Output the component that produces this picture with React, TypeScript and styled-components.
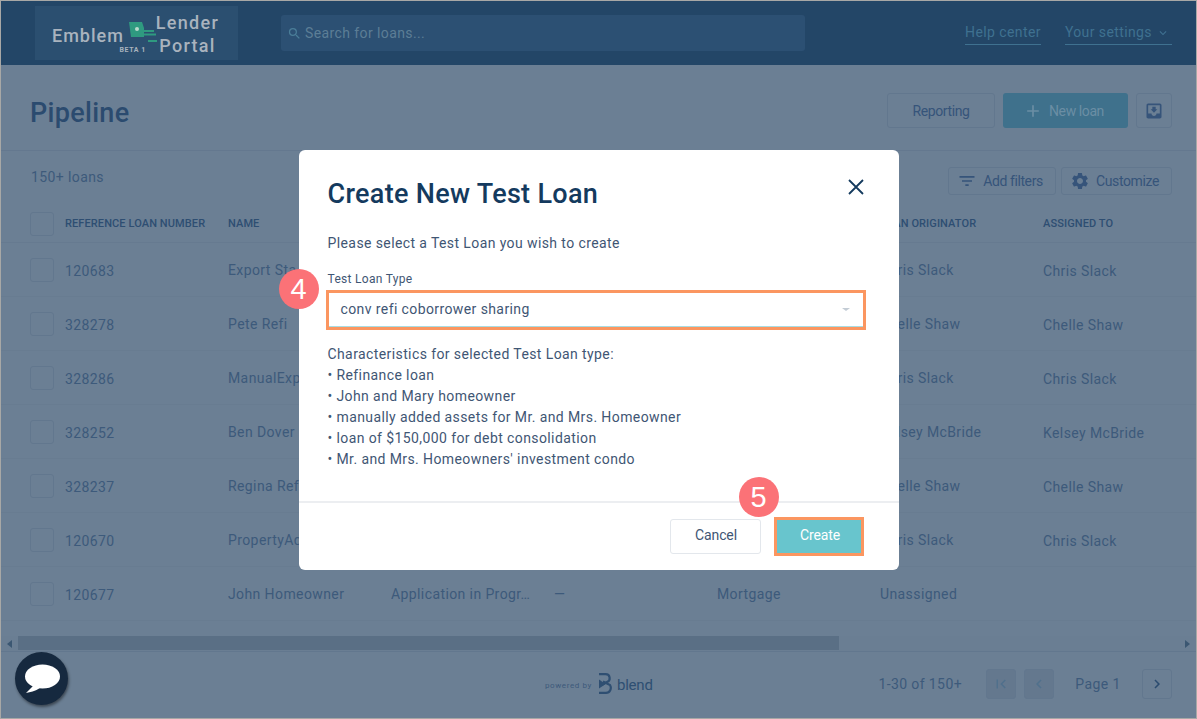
import React from 'react'
import styled, { createGlobalStyle } from 'styled-components'
import {
  MdAdd,
  MdChevronLeft,
  MdChevronRight,
  MdExpandMore,
  MdFilterList,
  MdFirstPage,
  MdMoveToInbox,
  MdSearch,
  MdSettings,
} from 'react-icons/md'

const GlobalStyle = createGlobalStyle`
  * {
    box-sizing: border-box;
  }
  body {
    margin: 0;
    font-family: Roboto, "Liberation Sans", sans-serif;
    background: #6b7f94;
  }
`

const Page = styled.div`
  position: relative;
  width: 1197px;
  height: 719px;
  overflow: hidden;
  display: flex;
  flex-direction: column;
  background: #6b7f94;
  border: 1px solid #a8a8a6;
  color: #3d5a7b;
  font-size: 14px;
  letter-spacing: 0.4px;
`

const TopBar = styled.header`
  height: 64px;
  flex: none;
  display: flex;
  align-items: center;
  padding: 0 24px 0 34px;
  background: #234667;
`

const LogoBox = styled.div`
  width: 203px;
  height: 54px;
  flex: none;
  display: flex;
  padding: 11px 0 0 17px;
  background: #2b4f70;
  color: #a9b3be;
`

const BrandLeft = styled.div`
  width: 94px;
  display: flex;
  flex-direction: column;
  flex: none;
`

const BrandName = styled.div`
  padding-top: 1px;
  font-size: 18px;
  line-height: 36px;
  font-weight: 500;
  letter-spacing: 1px;
`

const BrandBeta = styled.div`
  margin-top: -8px;
  text-align: right;
  font-size: 7px;
  line-height: 9px;
  font-weight: 700;
  letter-spacing: 0.6px;
`

const BrandFlag = styled.svg`
  width: 28px;
  height: 22px;
  flex: none;
  margin: 5px 0 0 -17px;
`

const BrandRight = styled.div`
  margin-left: -2px;
  margin-top: -6px;
  width: 65px;
  display: flex;
  flex-direction: column;
  align-items: center;
  font-size: 18px;
  line-height: 23px;
  font-weight: 500;
  letter-spacing: 1.3px;
`

const SearchBox = styled.div`
  width: 524px;
  height: 36px;
  margin-left: 43px;
  display: flex;
  align-items: center;
  gap: 3px;
  padding-left: 6px;
  border-radius: 3px;
  background: #2c5073;
  color: #5c7e96;
  font-size: 14px;
`

const SearchIcon = styled(MdSearch)`
  color: #4a7d98;
  font-size: 15px;
`

const TopLinks = styled.nav`
  margin-left: auto;
  padding-top: 2px;
  display: flex;
  gap: 24px;
  color: #3f7190;
`

const TopLink = styled.a<{ $menu?: boolean }>`
  display: flex;
  align-items: center;
  gap: 4px;
  padding: 0 ${p => (p.$menu ? 2 : 0)}px 2px 0;
  line-height: 19px;
  border-bottom: 1px solid #3f7190;
`

const TitleRow = styled.div`
  height: 86px;
  flex: none;
  display: flex;
  align-items: center;
  padding: 6px 24px 0 29px;
  border-bottom: 1px solid #64788f;
`

const PageTitle = styled.h1`
  margin: 5px auto 0 0;
  font-size: 27px;
  font-weight: 500;
  letter-spacing: 0.3px;
  color: #2b4b6f;
`

const OutlineButton = styled.button<{ $w: number; $h: number }>`
  width: ${p => p.$w}px;
  height: ${p => p.$h}px;
  display: flex;
  align-items: center;
  justify-content: center;
  gap: 5px;
  margin-left: 8px;
  padding: 0;
  border: 1px solid #62778e;
  border-radius: 3px;
  background: transparent;
  color: #36547a;
  font: inherit;
  letter-spacing: -0.4px;
`

const NewLoanButton = styled(OutlineButton)`
  padding-right: 4px;
  border: 0;
  background: #3f718c;
  color: #6b8ea4;
  gap: 6px;
`

const ButtonIcon = styled.span<{ $size: number }>`
  display: flex;
  font-size: ${p => p.$size}px;
`

const ToolRow = styled.div`
  height: 54px;
  flex: none;
  display: flex;
  align-items: center;
  padding: 6px 24px 0 30px;
`

const LoanCount = styled.span`
  margin: 0 auto 8px 0;
`

const ToolButton = styled(OutlineButton)`
  margin-left: 5px;
  padding-right: 4px;
  gap: 6px;
  &:first-of-type {
    margin-left: 0;
  }
`

const Table = styled.div`
  flex: 1;
  display: flex;
  flex-direction: column;
`

const Row = styled.div<{ $head?: boolean }>`
  height: ${p => (p.$head ? 38 : 54)}px;
  flex: none;
  display: grid;
  grid-template-columns: 64px repeat(7, 163px);
  align-items: center;
  border-bottom: 1px solid ${p => (p.$head ? '#667a90' : '#687c91')};
`

const CheckCell = styled.div`
  padding-left: 29px;
  display: flex;
`

const CheckBox = styled.span`
  width: 24px;
  height: 24px;
  border: 1px solid #62778e;
  border-radius: 3px;
`

const HeadCell = styled.div`
  font-size: 11px;
  font-weight: 500;
  letter-spacing: 0.1px;
  white-space: nowrap;
  color: #2e4e72;
`

const Cell = styled.div<{ $low?: boolean }>`
  padding-top: ${p => (p.$low ? 2 : 0)}px;
  padding-right: 12px;
  white-space: nowrap;
  overflow: hidden;
  text-overflow: ellipsis;
`

const ScrollTrack = styled.div`
  height: 16px;
  flex: none;
  display: flex;
  align-items: center;
  justify-content: space-between;
  padding: 0 6px;
  margin-top: 15px;
  border-bottom: 1px solid #62778e;
  background: #6a7e93;
`

const ScrollThumb = styled.div`
  width: 821px;
  height: 14px;
  margin: 0 auto 1px 6px;
  background: #5a6f85;
`

const ScrollArrow = styled.span<{ $right?: boolean }>`
  width: 0;
  height: 0;
  border-style: solid;
  border-width: 4px 0 4px 5px;
  border-color: transparent transparent transparent #3b5772;
  transform: ${p => (p.$right ? 'none' : 'scaleX(-1)')};
`

const Footer = styled.footer`
  height: 66px;
  flex: none;
  display: flex;
  align-items: center;
  padding: 0 24px 3px 544px;
`

const PoweredBy = styled.div`
  display: flex;
  align-items: center;
  gap: 6px;
  padding-top: 3px;
  font-size: 8px;
  letter-spacing: 0.6px;
`

const BlendWord = styled.span`
  margin-left: -1px;
  font-size: 15px;
  font-weight: 400;
  letter-spacing: -0.2px;
  color: #2f4f72;
`

const BlendMark = styled.svg`
  width: 14px;
  height: 21px;
  margin-top: -3px;
`

const PageCount = styled.span`
  margin-left: auto;
  margin-right: 24px;
`

const PageButton = styled.span<{ $off?: boolean }>`
  width: 30px;
  height: 30px;
  margin-right: 8px;
  display: flex;
  align-items: center;
  justify-content: center;
  font-size: 18px;
  border: 1px solid #62778e;
  border-radius: 3px;
  background: ${p => (p.$off ? '#64788e' : 'transparent')};
  color: ${p => (p.$off ? '#50708c' : '#2b4b6f')};
  &:last-child {
    margin-right: 0;
  }
`

const PageLabel = styled.span`
  width: 88px;
  text-align: center;
  margin-left: -8px;
`

const ChatBubble = styled.div`
  position: absolute;
  left: 14px;
  top: 651px;
  width: 53px;
  height: 53px;
  display: flex;
  align-items: center;
  justify-content: center;
  border-radius: 50%;
  background: #16293f;
  box-shadow: 1px 2px 3px rgba(0, 0, 0, 0.45);
`

const ModalLayer = styled.div`
  position: absolute;
  inset: 0;
  padding-top: 1px;
  display: flex;
  align-items: center;
  justify-content: center;
`

const Modal = styled.div`
  position: relative;
  width: 600px;
  height: 420px;
  display: flex;
  flex-direction: column;
  border-radius: 6px;
  background: #fff;
  color: #3f5674;
`

const ModalBody = styled.div`
  flex: 1;
  padding: 26px 0 0 29px;
`

const ModalHead = styled.div`
  display: flex;
  justify-content: space-between;
  padding-right: 35px;
`

const ModalTitle = styled.h2`
  margin: 0;
  font-size: 27px;
  line-height: 36px;
  font-weight: 500;
  letter-spacing: 0.3px;
  color: #143a5e;
`

const CloseIcon = styled.svg`
  width: 16px;
  height: 16px;
  margin-top: 3px;
  stroke: #143a5e;
  stroke-width: 1.8;
  fill: none;
`

const Intro = styled.p`
  margin: 21px 0 0;
  line-height: 20px;
`

const FieldLabel = styled.label`
  display: block;
  margin-top: 18px;
  font-size: 12px;
  line-height: 16px;
  letter-spacing: 0.3px;
`

const SelectBox = styled.div`
  width: 534px;
  height: 34px;
  margin: 6px 0 0 1px;
  display: flex;
  align-items: center;
  justify-content: space-between;
  padding: 0 13px 1px 12px;
  border-bottom: 1px solid #a8dde3;
  outline: 3px solid #fb9660;
`

const Caret = styled.span`
  width: 0;
  height: 0;
  border-style: solid;
  border-width: 3px 4px 0 4px;
  border-color: #c3ccd5 transparent transparent transparent;
`

const Details = styled.div`
  margin-top: 17px;
  line-height: 21px;
`

const ModalFooter = styled.div`
  height: 69px;
  flex: none;
  display: flex;
  justify-content: flex-end;
  gap: 16px;
  padding: 16px 38px 0 0;
  border-top: 2px solid #eceef1;
`

const CancelButton = styled.button`
  width: 91px;
  height: 35px;
  padding: 0 0 3px 2px;
  border: 1px solid #e3e7ec;
  border-radius: 3px;
  background: #fff;
  color: #3f5674;
  font: inherit;
  letter-spacing: -0.1px;
`

const CreateButton = styled.button`
  width: 84px;
  height: 33px;
  margin-top: 1px;
  padding: 0 0 3px 3px;
  border: 0;
  background: #68c5cd;
  color: #fff;
  font: inherit;
  letter-spacing: -0.1px;
  outline: 3px solid #fb9660;
`

const StepBadge = styled.span<{ $x: number; $y: number }>`
  position: absolute;
  left: ${p => p.$x}px;
  top: ${p => p.$y}px;
  width: 40px;
  height: 40px;
  display: flex;
  align-items: center;
  justify-content: center;
  border-radius: 50%;
  background: #fb7277;
  color: #fff;
  font-family: "Liberation Sans", sans-serif;
  font-size: 29px;
  letter-spacing: 0;
`

// the status, alert and type columns of these rows lie wholly under the modal
const rows = [
  { ref: '120683', name: 'Export Sta', owner: 'Chris Slack', assigned: 'Chris Slack' },
  { ref: '328278', name: 'Pete Refi', owner: 'Chelle Shaw', assigned: 'Chelle Shaw' },
  { ref: '328286', name: 'ManualExport', owner: 'Chris Slack', assigned: 'Chris Slack' },
  { ref: '328252', name: 'Ben Dover', owner: 'Kelsey McBride', assigned: 'Kelsey McBride' },
  { ref: '328237', name: 'Regina Refi', owner: 'Chelle Shaw', assigned: 'Chelle Shaw' },
  { ref: '120670', name: 'PropertyAddress', owner: 'Chris Slack', assigned: 'Chris Slack' },
  { ref: '120677', name: 'John Homeowner', status: 'Application in Progr…', alert: '—', type: 'Mortgage', owner: 'Unassigned', assigned: '' },
]

const details = [
  'Characteristics for selected Test Loan type:',
  '• Refinance loan',
  '• John and Mary homeowner',
  '• manually added assets for Mr. and Mrs. Homeowner',
  '• loan of $150,000 for debt consolidation',
  "• Mr. and Mrs. Homeowners' investment condo",
]

export default function App() {
  return (
    <Page>
      <GlobalStyle />
      <TopBar>
        <LogoBox>
          <BrandLeft>
            <BrandName>Emblem</BrandName>
            <BrandBeta>BETA 1</BrandBeta>
          </BrandLeft>
          <BrandFlag viewBox="0 0 28 22">
            <path d="M0 0h13l2 6v9H2z" fill="#2f9a80" />
            <circle cx="8" cy="7" r="2" fill="#b9d8cc" />
            <path d="M13 8h12v2H13zM14 11.500h13v2H14zM19 18h9v2h-9z" fill="#2f9a80" />
          </BrandFlag>
          <BrandRight>
            <span>Lender</span>
            <span>Portal</span>
          </BrandRight>
        </LogoBox>
        <SearchBox>
          <SearchIcon />
          Search for loans...
        </SearchBox>
        <TopLinks>
          <TopLink>Help center</TopLink>
          <TopLink $menu>
            Your settings
            <MdExpandMore size={14} />
          </TopLink>
        </TopLinks>
      </TopBar>

      <TitleRow>
        <PageTitle>Pipeline</PageTitle>
        <OutlineButton $w={108} $h={35}>Reporting</OutlineButton>
        <NewLoanButton $w={125} $h={35}>
          <ButtonIcon $size={20}><MdAdd /></ButtonIcon>
          New loan
        </NewLoanButton>
        <OutlineButton $w={36} $h={35}>
          <ButtonIcon $size={20}><MdMoveToInbox /></ButtonIcon>
        </OutlineButton>
      </TitleRow>

      <ToolRow>
        <LoanCount>150+ loans</LoanCount>
        <ToolButton $w={108} $h={28}>
          <ButtonIcon $size={20}><MdFilterList /></ButtonIcon>
          Add filters
        </ToolButton>
        <ToolButton $w={111} $h={28}>
          <ButtonIcon $size={20}><MdSettings /></ButtonIcon>
          Customize
        </ToolButton>
      </ToolRow>

      <Table>
        <Row $head>
          <CheckCell><CheckBox /></CheckCell>
          <HeadCell>REFERENCE LOAN NUMBER</HeadCell>
          <HeadCell>NAME</HeadCell>
          <HeadCell>STATUS</HeadCell>
          <HeadCell>ALERTS</HeadCell>
          <HeadCell>LOAN TYPE</HeadCell>
          <HeadCell>LOAN ORIGINATOR</HeadCell>
          <HeadCell>ASSIGNED TO</HeadCell>
        </Row>
        {rows.map(row => (
          <Row key={row.ref}>
            <CheckCell><CheckBox /></CheckCell>
            <Cell $low>{row.ref}</Cell>
            <Cell>{row.name}</Cell>
            <Cell>{row.status}</Cell>
            <Cell>{row.alert}</Cell>
            <Cell>{row.type}</Cell>
            <Cell>{row.owner}</Cell>
            <Cell $low>{row.assigned}</Cell>
          </Row>
        ))}
      </Table>

      <ScrollTrack>
        <ScrollArrow />
        <ScrollThumb />
        <ScrollArrow $right />
      </ScrollTrack>

      <Footer>
        <PoweredBy>
          powered by
          <BlendMark viewBox="0 0 14 21" fill="none" stroke="#2f4f72" strokeWidth="2.2">
            <path d="M1 1.200h6.500c5 0 5.500 6.300 1.500 7.800L3 12.500" />
            <path d="M5 8.500l7 3.500c2 3.500 0 7.800-4 7.800H1" />
            <path d="M1 6.500v9L7.500 11z" fill="#2f4f72" stroke="none" />
          </BlendMark>
          <BlendWord>blend</BlendWord>
        </PoweredBy>
        <PageCount>1-30 of 150+</PageCount>
        <PageButton $off><MdFirstPage /></PageButton>
        <PageButton $off><MdChevronLeft /></PageButton>
        <PageLabel>Page 1</PageLabel>
        <PageButton><MdChevronRight /></PageButton>
      </Footer>

      <ChatBubble>
        <svg width="36" height="30" viewBox="0 0 36 30" fill="#fff">
          <ellipse cx="18.500" cy="12.500" rx="17.500" ry="12" />
          <path d="M10 21 L2 29 C8 28 14 26 17 23z" />
        </svg>
      </ChatBubble>

      <ModalLayer>
        <Modal>
          <ModalBody>
            <ModalHead>
              <ModalTitle>Create New Test Loan</ModalTitle>
              <CloseIcon viewBox="0 0 16 16">
                <path d="M1 1l14 14M15 1L1 15" />
              </CloseIcon>
            </ModalHead>
            <Intro>Please select a Test Loan you wish to create</Intro>
            <FieldLabel>Test Loan Type</FieldLabel>
            <SelectBox>
              conv refi coborrower sharing
              <Caret />
            </SelectBox>
            <Details>
              {details.map(line => (
                <div key={line}>{line}</div>
              ))}
            </Details>
          </ModalBody>
          <ModalFooter>
            <CancelButton>Cancel</CancelButton>
            <CreateButton>Create</CreateButton>
          </ModalFooter>
          <StepBadge $x={-20} $y={119}>4</StepBadge>
          <StepBadge $x={440} $y={327}>5</StepBadge>
        </Modal>
      </ModalLayer>
    </Page>
  )
}
